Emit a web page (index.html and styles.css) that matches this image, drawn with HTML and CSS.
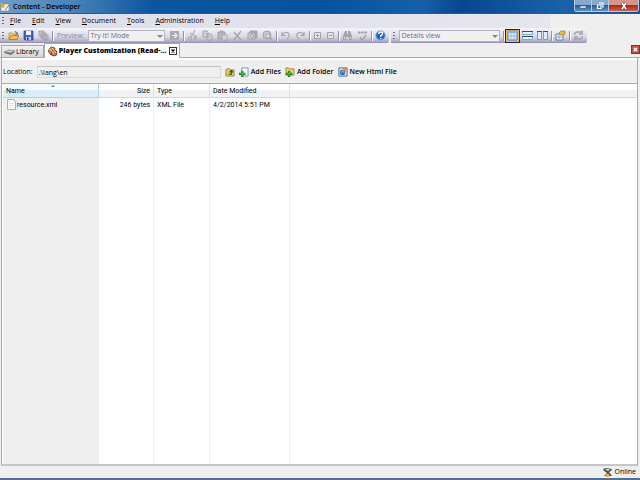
FILE: index.html
```html
<!DOCTYPE html>
<html lang="en">
<head>
    <meta charset="UTF-8">
    <meta name="viewport" content="width=device-width, initial-scale=1.0">
    <title>Content - Developer</title>
    <link rel="stylesheet" href="styles.css">
</head>
<body>
    <header class="titlebar">
        <svg class="icon" viewBox="0 0 10 10"><path d="M1 2h8v7H1z" fill="#f4f2ea" stroke="#8a8a80" stroke-width=".6"/><path d="M0 1l4 1 1 3-3 1z" fill="#e8a33a"/><path d="M5 8l4-5" stroke="#4a7ac0"/></svg>
        <h1>Content - Developer</h1>
        <div class="window-buttons">
            <button aria-label="Minimize"><svg viewBox="0 0 10 8"><path d="M2 4h6v2H2z" fill="#fff" stroke="#35506e" stroke-width=".5"/></svg></button>
            <button aria-label="Restore"><svg viewBox="0 0 10 8"><path d="M4 1h4v4H7M2.500 3H6v3.500H2.500z" fill="none" stroke="#fff" stroke-width="1.200"/></svg></button>
            <button class="close" aria-label="Close"><svg viewBox="0 0 10 8"><path d="M3 1l4 6M7 1L3 7" stroke="#5a3038" stroke-width="3"/><path d="M3 1l4 6M7 1L3 7" stroke="#fff" stroke-width="1.800"/></svg></button>
        </div>
    </header>

    <nav class="menu">
        <span class="grip"></span>
        <a href="#"><u>F</u>ile</a>
        <a href="#"><u>E</u>dit</a>
        <a href="#"><u>V</u>iew</a>
        <a href="#"><u>D</u>ocument</a>
        <a href="#"><u>T</u>ools</a>
        <a href="#"><u>A</u>dministration</a>
        <a href="#"><u>H</u>elp</a>
    </nav>

    <div class="toolbars">
        <div class="toolbar">
            <span class="grip"></span>
            <button aria-label="Open"><svg class="icon" viewBox="0 0 11 11"><path d="M1 9V3h3l1 1h3v2" fill="#f7d774" stroke="#a87a20" stroke-width=".7"/><path d="M1 9.500l2-4h8l-2 4z" fill="#f8bd3c" stroke="#9a6b18" stroke-width=".7"/><path d="M6 2q2-2 3 1l1-1v2.500H7.500l1-1Q8 2 6 2" fill="#4d6690"/></svg></button>
            <button aria-label="Save"><svg class="icon" viewBox="0 0 11 11"><path d="M1 1h9v9H2L1 9z" fill="#4c63c4" stroke="#25357c" stroke-width=".7"/><path d="M3 1h5v4H3z" fill="#eef4ff"/><path d="M3 7h5v3H3z" fill="#b9c8e8"/><path d="M4 7.500h1.500V10H4z" fill="#25357c"/></svg></button>
            <button aria-label="Save all" disabled><svg class="icon" viewBox="0 0 11 11"><path d="M1 1h5v5H1zM3 3h5v5H3zM5 5h5v5H5z" fill="#c7c6cc" stroke="#9d9ca4" stroke-width=".8"/><path d="M6 8h3v2H6z" fill="#a5a4ac"/></svg></button>
            <span class="sep"></span>
            <label for="preview">Preview:</label>
            <span class="dropdown"><select id="preview" class="preview" disabled><option>Try It! Mode</option></select></span>
            <button aria-label="Run" disabled><svg class="icon" viewBox="0 0 11 11"><path d="M1 1h9v9H1z" fill="#aaa9b1"/><path d="M3 5.500h4M5.500 3L8 5.500 5.500 8" fill="none" stroke="#ededf0" stroke-width="1.200"/></svg></button>
            <span class="sep"></span>
            <button aria-label="Cut" disabled><svg class="icon line" viewBox="0 0 11 11"><path d="M8 0L4 7M3 3l7 4"/><circle cx="3" cy="8.500" r="1.500"/><circle cx="8" cy="8.500" r="1.300"/></svg></button>
            <button aria-label="Copy" disabled><svg class="icon line" viewBox="0 0 11 11"><path d="M1 1h4l1 1v5H1zM5 4h4l1 1v5H5z" fill="#d8d7de"/><path d="M2.500 3.500h2M6.500 6.500h2M6.500 8.500h2" stroke-width=".7"/></svg></button>
            <button aria-label="Paste" disabled><svg class="icon line" viewBox="0 0 11 11"><path d="M1 2h7v7H1z" fill="#b9b8bf"/><path d="M3 1h3v1H3z"/><path d="M5 5h5v5H5z" fill="#e2e1e7"/><path d="M6.500 7h2M6.500 8.500h2" stroke-width=".6"/></svg></button>
            <button aria-label="Delete" disabled><svg class="icon line" viewBox="0 0 11 11"><path d="M2 2l7 8M9 1L2 10" stroke-width="1.300"/></svg></button>
            <button aria-label="Properties" disabled><svg class="icon line" viewBox="0 0 11 11"><path d="M3 1h7v7H3z" fill="#a9a8b0"/><path d="M1 3h7v6H1z" fill="#cdccd3"/><circle cx="5" cy="6" r="1.500" fill="#eee"/></svg></button>
            <button aria-label="Find" disabled><svg class="icon line" viewBox="0 0 11 11"><circle cx="5" cy="5" r="4" fill="#c8c7ce"/><circle cx="6" cy="6" r="2" fill="#e8e8ec"/><path d="M8 8l2 2" stroke-width="1.500"/></svg></button>
            <span class="sep"></span>
            <button aria-label="Undo" disabled><svg class="icon line" viewBox="0 0 11 11"><path d="M2 2v3.500h3.500M2.500 5Q5 1 8 3t-1 6" stroke-width="1.200"/></svg></button>
            <button aria-label="Redo" disabled><svg class="icon line" viewBox="0 0 11 11"><path d="M9 2v3.500H5.500M8.500 5Q6 1 3 3t1 6" stroke-width="1.200"/></svg></button>
            <span class="sep"></span>
            <button class="small" aria-label="Expand" disabled><svg class="icon line" viewBox="0 0 11 11"><path d="M2.500 2.500h6v6h-6z" fill="#e3e2e8"/><path d="M4 5.500h3M5.500 4v3"/></svg></button>
            <button class="small" aria-label="Collapse" disabled><svg class="icon line" viewBox="0 0 11 11"><path d="M2.500 2.500h6v6h-6z" fill="#e3e2e8"/><path d="M4 5.500h3"/></svg></button>
            <span class="sep"></span>
            <button aria-label="Search" disabled><svg class="icon" viewBox="0 0 11 11"><path d="M3 1h2v3h1V1h2l2 5v4H7V7H4v3H1V6z" fill="#a3a2aa"/><path d="M2 7h1v2H2zM8 7h1v2H8z" fill="#ddd"/></svg></button>
            <button aria-label="Spelling" disabled><svg class="icon line" viewBox="0 0 11 11"><path d="M1 2.500h9" stroke-width="2" stroke-dasharray="2.500 .7"/><path d="M3 7l2 3 4-5" stroke-width="1.500"/></svg></button>
            <span class="sep"></span>
            <button aria-label="Help"><svg class="icon" viewBox="0 0 11 11"><circle cx="5.500" cy="5.500" r="4.700" fill="#2463cf" stroke="#8eaee5" stroke-width=".8"/><path d="M3.700 4q0-2 2-2t2 1.700Q7.500 5 5.700 5.500V7M5.700 8v1.200" fill="none" stroke="#fff" stroke-width="1.300"/></svg></button>
        </div>
        <div class="toolbar">
            <span class="grip"></span>
            <span class="dropdown"><select class="details" aria-label="View" disabled><option>Details view</option></select></span>
            <span class="sep"></span>
            <button class="active" aria-label="Single pane"><svg class="icon" viewBox="0 0 11 11"><path d="M1 1h9v9H1z" fill="#d8ecff" stroke="#567fae"/><path d="M1 2h9" stroke="#86b7e6" stroke-width="2"/><path d="M4 3v7M7 3v7M1 6h9" stroke="#8fb5dc" stroke-width=".8"/></svg></button>
            <button aria-label="Split rows"><svg class="icon" viewBox="0 0 11 11"><path d="M.5 1.500h10v3H.5zM.5 6.500h10v3H.5z" fill="#e6f4ff" stroke="#8aa6c6"/><path d="M0 1.500h11M0 6.500h11" stroke="#274d82"/></svg></button>
            <button aria-label="Split columns"><svg class="icon" viewBox="0 0 11 11"><path d="M.5 1.500h4v8h-4zM6.500 1.500h4v8h-4z" fill="#d9edfd" stroke="#7d9abb"/><path d="M0 1.500h5M6 1.500h5" stroke="#274d82"/></svg></button>
            <span class="sep"></span>
            <button aria-label="Options"><svg class="icon" viewBox="0 0 11 11"><path d="M1 4h7v6H1z" fill="#eef6ff" stroke="#657f9f"/><path d="M2 7h5M4 5v4" stroke="#88a9cc"/><path d="M4 3l2-2h4v3l-2 1H5z" fill="#e9b947" stroke="#8c6c28" stroke-width=".6"/></svg></button>
            <span class="sep"></span>
            <button aria-label="Refresh" disabled><svg class="icon line" viewBox="0 0 11 11"><path d="M1.500 5q0-3 3-3h4M9 .5V4H6M9.500 6q0 3-3 3h-4M2 10.500V7h3" stroke-width="1.400"/></svg></button>
        </div>
    </div>

    <div class="tabs">
        <a href="#" class="tab"><svg class="icon" viewBox="0 0 11 11"><path d="M0 7l4-2 7 1-4 3z" fill="#777"/><path d="M0 6l5-2 6 1-4 2z" fill="#d5d5d5" stroke="#555" stroke-width=".5"/></svg>Library</a>
        <div class="tab current">
            <svg class="icon" viewBox="0 0 11 11"><path d="M1 5l3-4 4 1-1 5-3 2z" fill="#d48a4c" stroke="#703a20" stroke-width=".8"/><circle cx="7" cy="7" r="3" fill="#ca744a" stroke="#693323" stroke-width=".8"/><path d="M3 3l4 5M5 2l4 5" stroke="#f3d0a4"/></svg>
            <span>Player Customization (Read-...</span>
            <button aria-label="Close tab"><svg viewBox="0 0 8 8"><path d="M2 2l4 4M6 2L2 6" stroke="#000" stroke-width="1.600"/></svg></button>
        </div>
        <button class="close-pane" aria-label="Close pane"><svg viewBox="0 0 8 8"><path d="M2 2l4 4M6 2L2 6" stroke="#fff" stroke-width="1.500"/></svg></button>
    </div>

    <main>
        <div class="location">
            <label for="path">Location:</label>
            <input id="path" type="text" value=".\lang\en" readonly>
            <button aria-label="Up one level"><svg class="icon" viewBox="0 0 11 11"><path d="M1 3l1-1h3l1 1h4v7H1z" fill="#e7c95a" stroke="#78662a" stroke-width=".7"/><path d="M4 8h3V5M5 6l2-2 2 2" fill="none" stroke="#176329" stroke-width="1.300"/></svg></button>
            <button><svg class="icon" viewBox="0 0 11 11"><path d="M3 1h7v9H3z" fill="#f0f7ff" stroke="#5879a4" stroke-width=".8"/><path d="M0 7.500h7M3.500 4v7" stroke="#146820" stroke-width="2.600"/><path d="M.5 7.500h6M3.500 4.500v6" stroke="#42cf3c" stroke-width="1.200"/></svg>Add Files</button>
            <button><svg class="icon" viewBox="0 0 11 11"><path d="M1 1h3l1 1h5v7H1z" fill="#eed16c" stroke="#8b7430" stroke-width=".8"/><path d="M1 7.500h7M4.500 4v7" stroke="#146820" stroke-width="2.600"/><path d="M1.500 7.500h6M4.500 4.500v6" stroke="#42cf3c" stroke-width="1.200"/></svg>Add Folder</button>
            <button><svg class="icon" viewBox="0 0 11 11"><path d="M1 1h9v9H1z" fill="#dcebfc" stroke="#3f618c"/><circle cx="5" cy="6" r="3" fill="#2870c9"/><path d="M6 1h3v4L5 4z" fill="#f08a28"/><path d="M3 6q2-2 4 0" fill="none" stroke="#acd4ff"/></svg>New Html File</button>
        </div>

        <table>
            <thead>
                <tr>
                    <th class="name">Name</th>
                    <th class="size">Size</th>
                    <th>Type</th>
                    <th>Date Modified</th>
                    <th></th>
                </tr>
            </thead>
            <tbody>
                <tr>
                    <td><svg class="icon" viewBox="0 0 11 11"><path d="M1.500.5h6l2 2v8h-8z" fill="#fff" stroke="#909aa5" stroke-width=".8"/><path d="M7.500.5v2h2M3 4.500h5M3 6.500h5M3 8.500h5" fill="none" stroke="#d3dbe3" stroke-width=".7"/></svg>resource.xml</td>
                    <td class="size">246 bytes</td>
                    <td>XML File</td>
                    <td>4/2/2014 5:51 PM</td>
                    <td></td>
                </tr>
                <tr><td></td><td></td><td></td><td></td><td></td></tr>
            </tbody>
        </table>
    </main>

    <footer>
        <svg class="icon" viewBox="0 0 11 11"><path d="M1 2l3-1 6 1-1 2-2 1 3 4H2l3-3-3-2z" fill="#555"/><path d="M3 2h5L6 4z" fill="#ddd"/><path d="M4 7h3v3H4z" fill="#e9b43a"/></svg>
        <span>Online</span>
    </footer>
</body>
</html>
```
FILE: styles.css
```css
:root {
    --face: #efefef;
    --line: #a9a9b3;
    --text: #000;
    --muted: #8c8b94;
}

* {
    box-sizing: border-box;
}

body {
    margin: 0;
    min-height: 100vh;
    display: flex;
    flex-direction: column;
    background: var(--face);
    border-bottom: 2px solid #536f95;
    color: var(--text);
    font: 500 7px/10px "Open Sans", "Noto Sans", sans-serif;
}

button, select, input {
    font: inherit;
    color: inherit;
    margin: 0;
    padding: 0;
    border: 0;
    background: none;
}

button {
    display: flex;
    align-items: center;
    justify-content: center;
}

a {
    color: inherit;
    text-decoration: none;
}

svg {
    display: block;
}

.icon {
    width: 11px;
    height: 11px;
    flex: none;
}

.line {
    fill: none;
    stroke: #a3a2aa;
}

.titlebar {
    display: flex;
    align-items: center;
    gap: 3px;
    height: 14px;
    background: linear-gradient(100deg, #6f9dc8 0, #4681b8 12%, #0c559f 24%, #07519f 50%, #165fa9 66%, #07478f 72%, #1b62ab 88%, #0e4d94 100%);
    border-bottom: 1px solid #31597f;
}

.titlebar .icon {
    width: 10px;
    height: 10px;
}

h1 {
    flex: 1;
    margin: 0;
    font-size: 7px;
    font-weight: 600;
}

.window-buttons {
    display: flex;
    align-self: flex-start;
    margin-right: 1px;
    border: 1px solid #b4cbe2;
    border-top: 0;
    border-radius: 0 0 3px 3px;
    overflow: hidden;
}

.window-buttons button {
    width: 17px;
    height: 11px;
    background: linear-gradient(#86a9cd 45%, #285d96 50%, #5f91c0);
    border-right: 1px solid #b4cbe2;
}

.window-buttons .close {
    width: 29px;
    background: linear-gradient(#d79488 45%, #ac2a20 50%, #cf6048);
    border: 0;
}

.window-buttons svg {
    width: 10px;
    height: 8px;
}

.menu {
    display: flex;
    align-items: center;
    gap: 11px;
    height: 14px;
    padding-left: 2px;
    background: linear-gradient(90deg, #dedeea 0, #e6e6ef 86%, var(--face) 86%);
}

.menu .grip {
    margin-right: -5px;
}

.grip {
    width: 2px;
    height: 8px;
    background: repeating-linear-gradient(#6d6c86 0 1px, transparent 1px 3px);
}

.toolbars {
    display: flex;
    gap: 2px;
}

.toolbar {
    display: flex;
    align-items: center;
    gap: 4px;
    height: 15px;
    padding: 0 3px 0 2px;
    background: linear-gradient(#f5f5fa, #d8d7e4 60%, #aaa7c3 92%, #8986a8);
    border-radius: 0 2px 2px 0;
}

.toolbar .small {
    width: 9px;
}

.sep {
    width: 1px;
    height: 10px;
    margin: 0 -1px;
    background: #9391ab;
    box-shadow: 1px 0 #fafaff;
}

.toolbar label {
    padding-left: 1px;
    color: var(--muted);
}

.dropdown {
    position: relative;
    display: flex;
}

.dropdown::after {
    content: "";
    position: absolute;
    top: 5px;
    right: 2px;
    border: 3px solid transparent;
    border-top-color: #85848c;
    border-bottom: 0;
}

.dropdown select {
    height: 12px;
    padding-left: 1px;
    appearance: none;
    color: #6d6c74;
    opacity: 1;
    background: #f0eff2;
    border: 1px solid #b5b4bd;
}

.dropdown .preview {
    width: 77px;
}

.dropdown .details {
    width: 101px;
}

.toolbar .active {
    width: 15px;
    height: 14px;
    margin: 0 -2px;
    border: 1px solid #16286c;
    background: #f6b45c;
}

.tabs {
    display: flex;
    align-items: flex-end;
    height: 15px;
    padding-left: 1px;
    border-bottom: 1px solid var(--line);
}

.tab {
    display: flex;
    align-items: center;
    gap: 1px;
    height: 12px;
    padding: 0 4px 0 2px;
    border: 1px solid var(--line);
    border-bottom: 0;
    background: linear-gradient(#f0f0f0, #d6d6d6);
}

.tab.current {
    height: 15px;
    margin-bottom: -1px;
    padding: 0 2px;
    background: #fff;
    font-weight: 800;
}

.tab button {
    width: 8px;
    height: 8px;
    margin-left: 1px;
    border: 1px solid #333;
}

.close-pane {
    width: 9px;
    height: 9px;
    margin: 0 0 3px auto;
    background: #bd5148;
    border: 1px solid #743630;
}

main {
    flex: 1;
    display: flex;
    flex-direction: column;
    margin: 0 2px 0 1px;
    border: 1px solid var(--line);
    border-top: 0;
    border-bottom: 2px solid #c5c5cd;
}

.location {
    display: flex;
    align-items: center;
    gap: 4px;
    height: 26px;
    padding: 1px 1px 0;
    border-top: 2px solid #fff;
    border-bottom: 1px solid var(--line);
}

.location input {
    width: 184px;
    height: 12px;
    padding: 0 1px;
    border: 1px solid #d9d9d9;
    border-top-color: #c2c2c2;
}

.location button {
    gap: 2px;
    font-weight: 600;
}

.location .icon {
    width: 10px;
    height: 10px;
}

table {
    flex: 1;
    display: grid;
    grid-template: 14px 1fr / 1fr;
    background: #fff;
    border-left: 1px solid #fff;
    font-family: Roboto, "Open Sans", sans-serif;
}

thead, tbody {
    display: grid;
}

tbody {
    grid-template-rows: 13px 1fr;
}

tr {
    display: grid;
    grid-template-columns: 96px 55px 56px 80px 1fr;
}

th, td {
    display: flex;
    align-items: center;
    padding: 0 3px;
    border-right: 1px solid #edf1f5;
    font-weight: 400;
    white-space: nowrap;
}

th {
    background: linear-gradient(#fff 45%, #f1f2f6 50%);
    border-bottom: 1px solid #d5d5da;
    border-right-color: #dfe3e9;
}

th.name {
    position: relative;
    background: linear-gradient(#f3fbfe 45%, #d8eff8 50%);
    border-color: #a9d7e9;
}

th.name::after {
    content: "";
    position: absolute;
    top: 1px;
    left: 50%;
    border: 2px solid transparent;
    border-top: 0;
    border-bottom-color: #5a8ba8;
}

th:last-child, td:last-child {
    border-right: 0;
}

td:first-child {
    background: var(--face);
}

.size {
    justify-content: flex-end;
}

footer {
    display: flex;
    align-items: center;
    justify-content: flex-end;
    gap: 2px;
    height: 12px;
    padding-right: 4px;
}
```
